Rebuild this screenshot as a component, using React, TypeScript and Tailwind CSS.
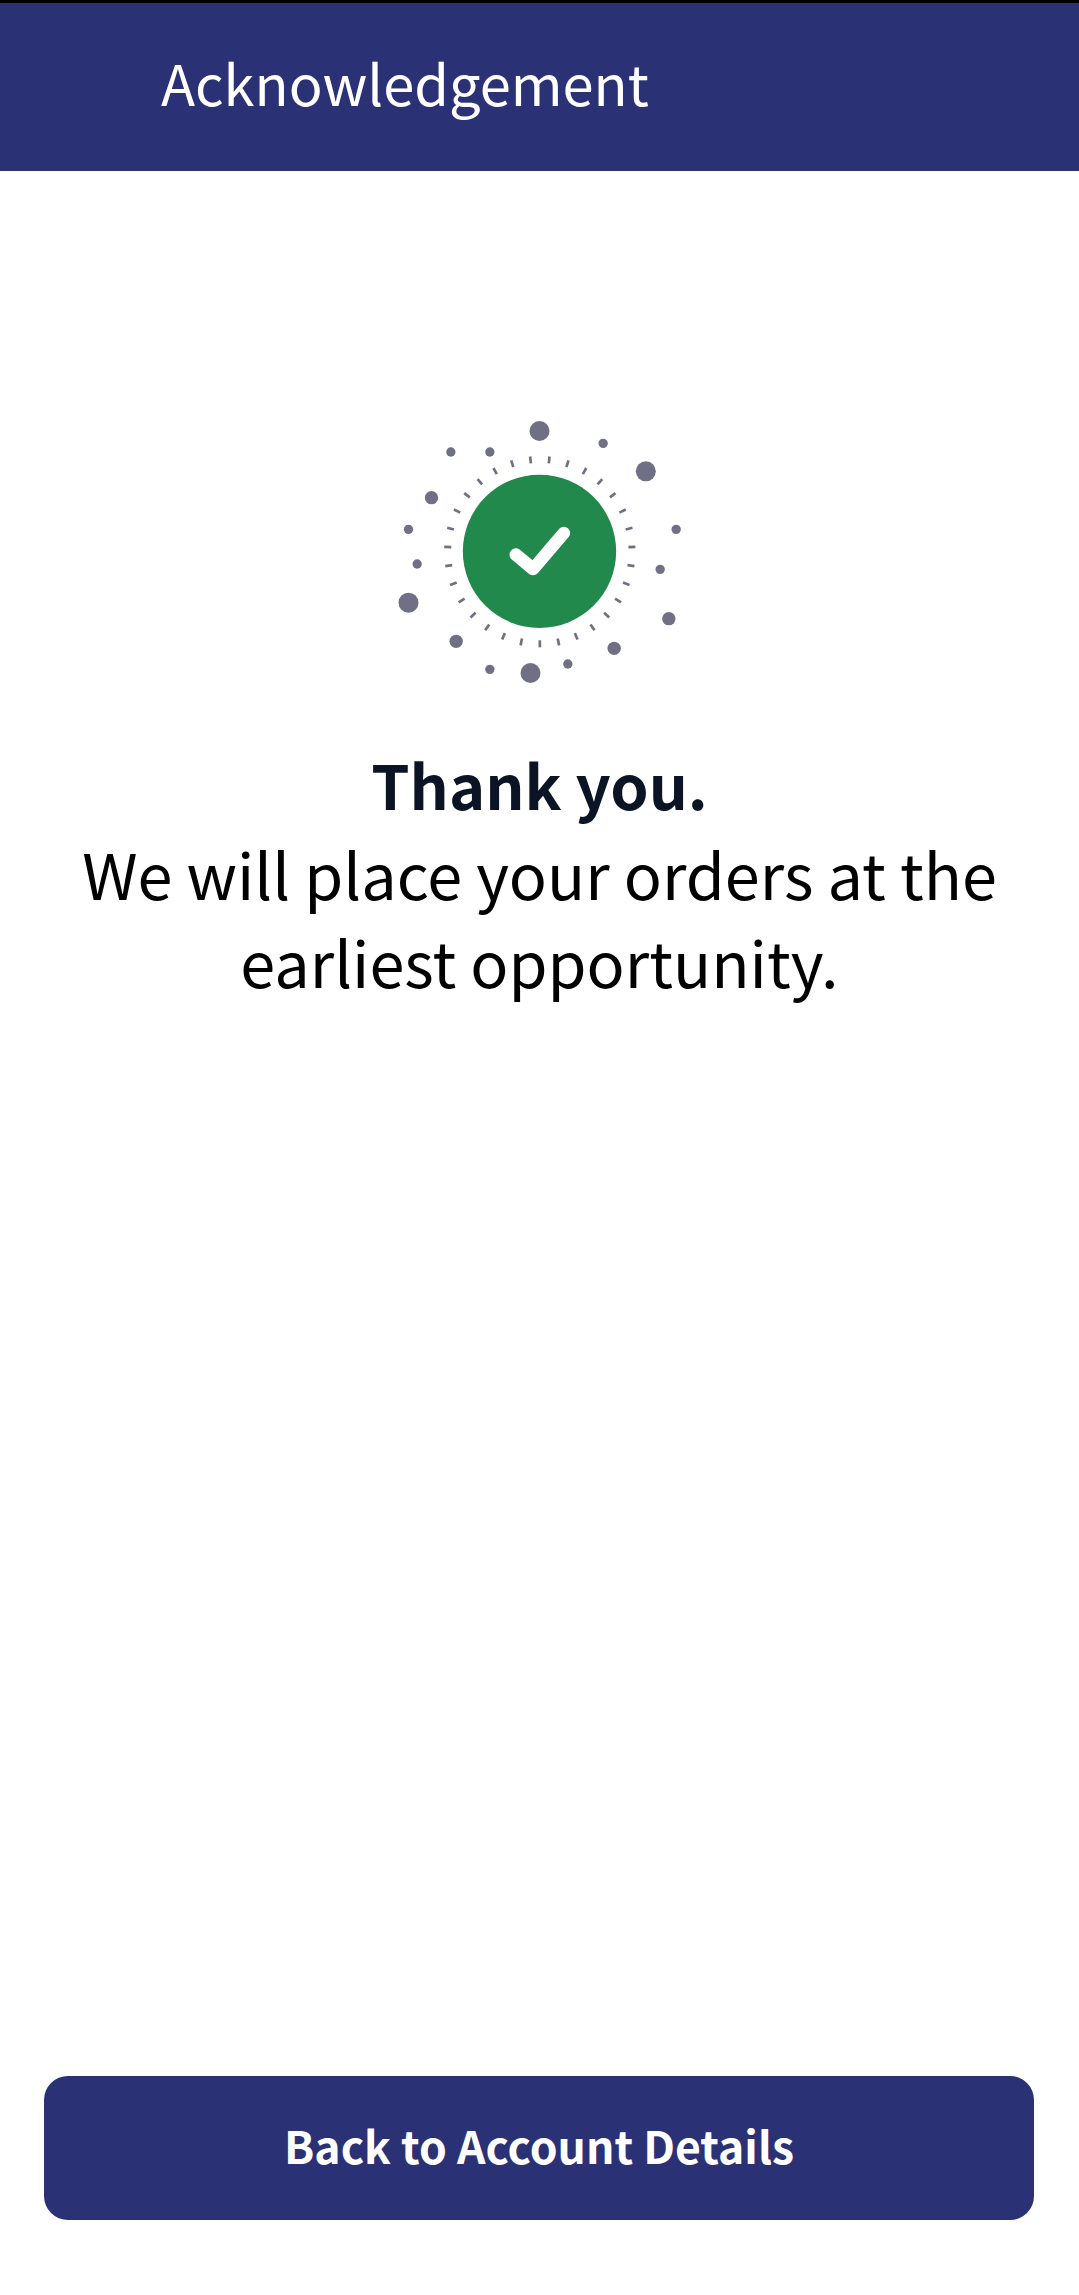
import React from "react";

const largeDots = [
  [507, 93],
  [826, 214],
  [114, 608],
  [480, 819],
];
const mediumDots = [
  [183, 293],
  [895, 656],
  [257, 724],
  [731, 745],
];
const smallDots = [
  [241, 156],
  [358, 156],
  [698, 130],
  [114, 388],
  [917, 388],
  [140, 492],
  [869, 508],
  [358, 808],
  [592, 792],
];

// 31 radial ticks around the green disc, first one points straight down
const ticks = Array.from({ length: 31 }, (_, i) => {
  const a = (i * 2 * Math.PI) / 31;
  const sin = Math.sin(a);
  const cos = Math.cos(a);
  return {
    x1: 508 + sin * 266,
    y1: 455 + cos * 266,
    x2: 508 + sin * 287,
    y2: 455 + cos * 287,
  };
});

const SuccessIcon = () => (
  <svg width="330" height="300" viewBox="13.5 0 990 900" fill="none">
    {largeDots.map(([x, y]) => (
      <circle key={`${x}-${y}`} cx={x} cy={y} r="30" fill="#6f6f86" />
    ))}
    {mediumDots.map(([x, y]) => (
      <circle key={`${x}-${y}`} cx={x} cy={y} r="20" fill="#6f6f86" />
    ))}
    {smallDots.map(([x, y]) => (
      <circle key={`${x}-${y}`} cx={x} cy={y} r="14" fill="#6f6f86" />
    ))}
    {ticks.map((t, i) => (
      <line key={i} {...t} stroke="#6f6f86" strokeWidth="8" />
    ))}
    <circle cx="507" cy="454" r="230" fill="#20894b" />
    <path
      d="M436 464 L488 507 L580 399"
      stroke="#ffffff"
      strokeWidth="38"
      strokeLinecap="round"
      strokeLinejoin="round"
    />
  </svg>
);

const App = () => {
  return (
    <div className="flex flex-col h-[2295px] bg-white font-['Noto_Sans_CJK_JP','Noto_Sans',sans-serif]">
      <header className="flex items-center h-[171px] border-t-[3px] border-black bg-[#2a3175] pl-[161px]">
        <h1 className="text-[56px] leading-[72px] mb-[11px] text-white">Acknowledgement</h1>
      </header>
      <main className="flex-1 flex flex-col items-center pt-[229px]">
        <SuccessIcon />
        <div className="mt-[40px] text-center text-[63px] leading-[88.5px] text-black">
          <p className="text-[61.4px] font-bold text-[#0b1424]">Thank you.</p>
          <p>We will place your orders at the</p>
          <p>earliest opportunity.</p>
        </div>
      </main>
      <div className="px-11 pb-[75px]">
        <button className="w-[990px] h-[144px] rounded-[24px] bg-[#2a3175] pb-[6px] text-[44.5px] font-semibold text-white">
          Back to Account Details
        </button>
      </div>
    </div>
  );
};

export default App;
